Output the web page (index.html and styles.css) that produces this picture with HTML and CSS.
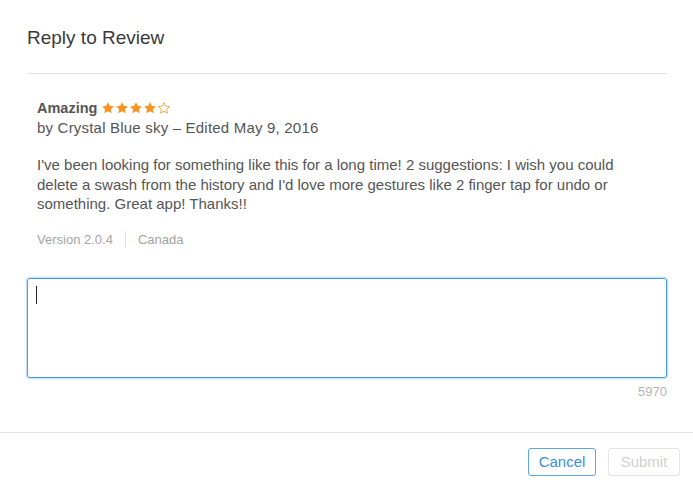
FILE: index.html
```html
<!DOCTYPE html>
<html>
<head>
<meta charset="utf-8">
<link rel="stylesheet" href="styles.css">
</head>
<body>
<div class="dialog">
  <div class="content">
    <h1 class="title">Reply to Review</h1>
    <div class="review">
      <div class="head"><span class="rtitle">Amazing</span>
        <span class="stars">
          <svg class="star" viewBox="0 0 24 24"><path class="full" d="M12 2l3.09 6.26L22 9.27l-5 4.87 1.18 6.88L12 17.77l-6.18 3.25L7 14.14 2 9.27l6.91-1.01L12 2z"/></svg>
          <svg class="star" viewBox="0 0 24 24"><path class="full" d="M12 2l3.09 6.26L22 9.27l-5 4.87 1.18 6.88L12 17.77l-6.18 3.25L7 14.14 2 9.27l6.91-1.01L12 2z"/></svg>
          <svg class="star" viewBox="0 0 24 24"><path class="full" d="M12 2l3.09 6.26L22 9.27l-5 4.87 1.18 6.88L12 17.77l-6.18 3.25L7 14.14 2 9.27l6.91-1.01L12 2z"/></svg>
          <svg class="star" viewBox="0 0 24 24"><path class="full" d="M12 2l3.09 6.26L22 9.27l-5 4.87 1.18 6.88L12 17.77l-6.18 3.25L7 14.14 2 9.27l6.91-1.01L12 2z"/></svg>
          <svg class="star" viewBox="0 0 24 24"><path class="empty" d="M12 2.8l2.9 5.9 6.5.95-4.7 4.58 1.1 6.47L12 17.64l-5.8 3.06 1.1-6.47-4.7-4.58 6.5-.95z"/></svg>
        </span>
      </div>
      <div class="author">by Crystal Blue sky – Edited May 9, 2016</div>
      <p class="body">I've been looking for something like this for a long time! 2 suggestions: I wish you could delete a swash from the history and I'd love more gestures like 2 finger tap for undo or something. Great app! Thanks!!</p>
      <div class="meta"><span>Version 2.0.4</span><span class="sep"></span><span>Canada</span></div>
    </div>
    <div class="reply"><span class="caret"></span></div>
    <div class="count">5970</div>
  </div>
  <div class="footer">
    <button class="btn cancel">Cancel</button>
    <button class="btn submit">Submit</button>
  </div>
</div>
</body>
</html>
```
FILE: styles.css
```css
html, body { margin: 0; padding: 0; background: #fff; }
body { font-family: "Liberation Sans", Arial, sans-serif; color: #555; width: 693px; height: 488px; overflow: hidden; }
.dialog { display: flex; flex-direction: column; }
.content { padding: 0 26px 0 27px; }
.title { margin: 0; padding: 27px 0 0 0; height: 74px; box-sizing: border-box; font-size: 19px; font-weight: normal; color: #3a3a3a; border-bottom: 1px solid #e3e3e3; line-height: 22px; }
.review { padding: 25px 10px 0 10px; }
.head { font-size: 14.5px; line-height: 18px; height: 18px; display: flex; align-items: center; gap: 4px; }
.rtitle { font-weight: bold; color: #555; }
.stars { display: flex; align-items: center; margin-top: -1px; }
.star { width: 14px; height: 14px; display: block; }
.full { fill: #f7931e; }
.empty { fill: none; stroke: #f7931e; stroke-width: 1.4; stroke-linejoin: miter; }
.author { font-size: 15px; line-height: 18px; margin-top: 2px; color: #555; letter-spacing: 0.2px; }
.body { margin: 18px 0 0 0; font-size: 15px; line-height: 19.5px; color: #555; }
.meta { display: flex; align-items: center; font-size: 13px; color: #a3a3a3; margin-top: 18px; height: 16px; }
.sep { width: 1px; height: 17px; background: #e3e3e3; margin: 0 12px 0 12px; }
.reply { margin-top: 30px; height: 100px; box-sizing: border-box; border: 1px solid #4a9fe8; border-radius: 3px; box-shadow: 0 0 0 1px #c4e0f7, 0 0 3px #9ccbf2; padding: 7px 8px; }
.caret { display: block; width: 1px; height: 18px; background: #222; }
.count { text-align: right; font-size: 13px; color: #b5b5b5; margin-top: 7px; line-height: 14px; }
.footer { margin-top: 33px; border-top: 1px solid #e3e3e3; display: flex; justify-content: flex-end; gap: 12px; padding: 15px 13px 0 0; }
.btn { font-family: "Liberation Sans", Arial, sans-serif; font-size: 15px; height: 28px; box-sizing: border-box; border-radius: 3px; background: #fff; padding: 0; }
.cancel { border: 1px solid #5aa6e6; color: #3a8fd9; width: 68px; }
.submit { border: 1px solid #e3e3e3; color: #d0d0d0; width: 72px; }
```
